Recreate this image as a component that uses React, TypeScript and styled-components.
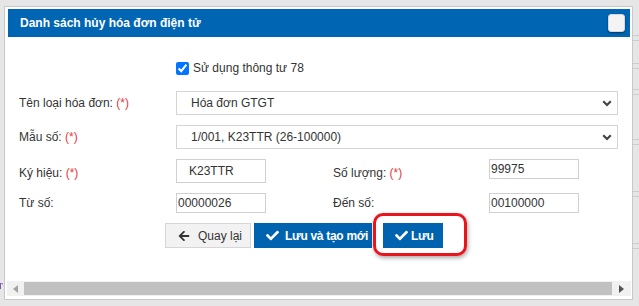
import React from "react";
import styled, { createGlobalStyle } from "styled-components";
import { FaArrowLeft, FaCheck } from "react-icons/fa";

const GlobalStyle = createGlobalStyle`
  html, body {
    margin: 0;
    padding: 0;
    background: #e6e6e6;
    font-family: "Liberation Sans", Arial, sans-serif;
  }
  #root {
    width: 639px;
    height: 306px;
    overflow: hidden;
  }
  * { box-sizing: border-box; }
`;

const Page = styled.div`
  display: flex;
  height: 306px;
  padding-top: 6px;
`;

const LeftGutter = styled.div`
  width: 4px;
  height: 294px;
  display: flex;
  flex-direction: column;
  justify-content: flex-end;
  overflow: hidden;
  padding-bottom: 10px;
`;

const RightStrip = styled.div`
  flex: 1;
  display: flex;
  flex-direction: column;
  margin-top: -6px;
`;

const StripSeg = styled.div<{ $h: number }>`
  height: ${(p) => p.$h}px;
  border-bottom: 1px solid #cdcdcd;
  flex-shrink: 0;
`;

const Dialog = styled.div`
  width: 629px;
  height: 294px;
  flex-shrink: 0;
  background: #fff;
  border: 1px solid #c8c8c8;
  padding: 2px 1px 3px 2px;
  display: flex;
  flex-direction: column;
`;

const Header = styled.div`
  height: 28px;
  margin: 0 1px;
  background: #0065b3;
  display: flex;
  align-items: center;
  justify-content: space-between;
  padding: 0 5px 0 12px;
`;

const Title = styled.span`
  color: #fff;
  font-weight: bold;
  font-size: 12px;
`;

const CloseButton = styled.div`
  width: 17px;
  height: 18px;
  background: #f4f4f4;
  border: 1px solid #d8d8d8;
  border-radius: 3px;
  box-shadow: 0 1px 2px rgba(0, 0, 0, 0.45);
`;

const Body = styled.div`
  flex: 1;
  display: flex;
  flex-direction: column;
  padding-left: 12px;
`;

const CheckRow = styled.label`
  margin-top: 23px;
  margin-left: 157px;
  height: 16px;
  display: flex;
  align-items: center;
  gap: 4px;
  font-size: 12px;
  color: #333;
`;

const Check = styled.input`
  margin: 0;
  width: 13px;
  height: 13px;
`;

const FormGrid = styled.div`
  margin-top: 15px;
  display: grid;
  grid-template-columns: 157px 157px 156px 129px;
  grid-auto-rows: auto;
  row-gap: 10px;
  align-items: start;
`;

const Label = styled.div<{ $shift?: number }>`
  font-size: 12px;
  color: #333;
  align-self: center;
  padding-top: ${(p) => p.$shift ?? 0}px;
  white-space: nowrap;
`;

const Req = styled.span`
  color: #e8383d;
`;

const SelectBox = styled.div`
  grid-column: 2 / span 3;
  height: 24px;
  border: 1px solid #d4d4d4;
  display: flex;
  align-items: center;
  justify-content: space-between;
  padding: 0 5px 0 14px;
  font-size: 12px;
  color: #333;
`;

const TextBox = styled.div<{ $h: number; $pad: number }>`
  width: 90px;
  height: ${(p) => p.$h}px;
  border: 1px solid #d0d0d0;
  display: flex;
  align-items: center;
  padding-left: ${(p) => p.$pad}px;
  font-size: 12px;
  color: #333;
`;

const ButtonRow = styled.div`
  margin-top: 10px;
  margin-left: 146px;
  display: flex;
  height: 25px;
`;

const Button = styled.div<{ $w: number; $primary?: boolean; $gap?: number; $ml?: number }>`
  width: ${(p) => p.$w}px;
  flex-shrink: 0;
  height: 25px;
  margin-left: ${(p) => p.$ml ?? 0}px;
  display: flex;
  align-items: center;
  gap: ${(p) => p.$gap ?? 7}px;
  padding-left: 12px;
  font-size: 12px;
  white-space: nowrap;
  overflow: hidden;
  background: ${(p) => (p.$primary ? "#0063af" : "#f2f2f2")};
  color: ${(p) => (p.$primary ? "#fff" : "#333")};
  font-weight: ${(p) => (p.$primary ? "bold" : "normal")};
  letter-spacing: ${(p) => (p.$primary ? "-0.3px" : "0")};
  border: ${(p) => (p.$primary ? "none" : "1px solid #d6d6d6")};
  svg { flex-shrink: 0; }
`;

const HighlightWrap = styled.div`
  position: relative;
  margin-left: 11px;
  display: flex;
`;

const Highlight = styled.div`
  position: absolute;
  left: -10px;
  top: -10px;
  width: 94px;
  height: 43px;
  border: 3px solid #e8151c;
  border-radius: 10px;
  box-shadow: 1px 2px 4px rgba(0, 0, 0, 0.35);
  pointer-events: none;
`;

const Spacer = styled.div`
  flex: 1;
`;

const Scrollbar = styled.div`
  height: 15px;
  background: #f1f1f1;
  display: flex;
  align-items: center;
`;

const ArrowCell = styled.div<{ $w: number }>`
  width: ${(p) => p.$w}px;
  height: 15px;
  display: flex;
  align-items: center;
  justify-content: center;
`;

const Thumb = styled.div`
  flex: 1;
  height: 13px;
  background: #c1c1c1;
`;

const Tri = ({ dir, color }: { dir: "left" | "right"; color: string }) => (
  <svg width="5" height="8" viewBox="0 0 5 8">
    {dir === "left" ? (
      <polygon points="5,0 5,8 0,4" fill={color} />
    ) : (
      <polygon points="0,0 0,8 5,4" fill={color} />
    )}
  </svg>
);

const Chevron = () => (
  <svg width="10" height="7" viewBox="0 0 10 7">
    <polyline points="1.2,1.2 5,5 8.8,1.2" fill="none" stroke="#444" strokeWidth="2.2" />
  </svg>
);

const BehindMark = () => (
  <svg width="4" height="8" viewBox="0 0 4 8">
    <rect x="0" y="1" width="1" height="6" fill="#7b5aa8" />
    <rect x="1" y="1" width="2" height="1" fill="#b07ccf" />
    <rect x="2" y="2" width="1" height="1" fill="#c9a0dc" />
  </svg>
);

const stripLines = [36, 42, 66, 72, 94, 100, 146, 152, 200, 206, 254, 260];

export default function App() {
  let prev = 0;
  const segs = stripLines.map((y) => {
    const h = y - prev;
    prev = y + 1;
    return h;
  });
  return (
    <>
      <GlobalStyle />
      <Page>
        <LeftGutter>
          <BehindMark />
        </LeftGutter>
        <Dialog>
          <Header>
            <Title>Danh sách hủy hóa đơn điện tử</Title>
            <CloseButton />
          </Header>
          <Body>
            <CheckRow>
              <Check type="checkbox" defaultChecked />
              <span>Sử dụng thông tư 78</span>
            </CheckRow>
            <FormGrid>
              <Label>
                Tên loại hóa đơn: <Req>(*)</Req>
              </Label>
              <SelectBox>
                <span>Hóa đơn GTGT</span>
                <Chevron />
              </SelectBox>

              <Label>
                Mẫu số: <Req>(*)</Req>
              </Label>
              <SelectBox>
                <span>1/001, K23TTR (26-100000)</span>
                <Chevron />
              </SelectBox>

              <Label $shift={3}>
                Ký hiệu: <Req>(*)</Req>
              </Label>
              <TextBox $h={24} $pad={12}>K23TTR</TextBox>
              <Label $shift={3}>
                Số lượng: <Req>(*)</Req>
              </Label>
              <TextBox $h={20} $pad={1}>99975</TextBox>

              <Label $shift={-2}>Từ số:</Label>
              <TextBox $h={20} $pad={1}>00000026</TextBox>
              <Label $shift={-2}>Đến số:</Label>
              <TextBox $h={20} $pad={1}>00100000</TextBox>
            </FormGrid>
            <ButtonRow>
              <Button $w={86} $gap={8}>
                <FaArrowLeft size={12} color="#333" />
                <span>Quay lại</span>
              </Button>
              <Button $w={118} $primary $ml={3} $gap={6}>
                <FaCheck size={13} />
                <span>Lưu và tạo mới</span>
              </Button>
              <HighlightWrap>
                <Button $w={60} $primary $gap={3}>
                  <FaCheck size={13} />
                  <span>Lưu</span>
                </Button>
                <Highlight />
              </HighlightWrap>
            </ButtonRow>
          </Body>
          <Spacer />
          <Scrollbar>
            <ArrowCell $w={17}>
              <Tri dir="left" color="#a3a3a3" />
            </ArrowCell>
            <Thumb />
            <ArrowCell $w={19}>
              <Tri dir="right" color="#505050" />
            </ArrowCell>
          </Scrollbar>
        </Dialog>
        <RightStrip>
          {segs.map((h, i) => (
            <StripSeg key={i} $h={h} />
          ))}
        </RightStrip>
      </Page>
    </>
  );
}
